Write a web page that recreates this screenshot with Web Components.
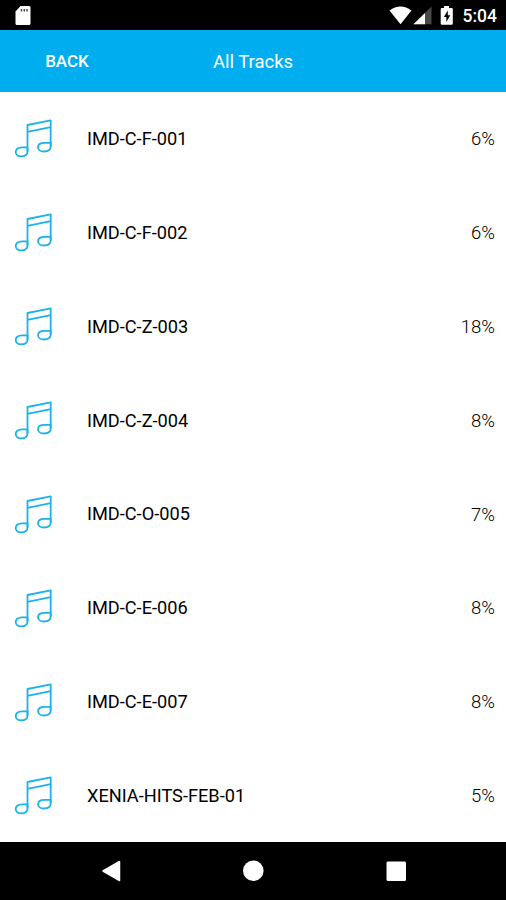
<!DOCTYPE html>
<html lang="en">
<head>
<meta charset="utf-8">
<title>All Tracks</title>
<style>
    body {
        margin: 0;
        background: #fff;
        font-family: Roboto, "Liberation Sans", sans-serif;
    }
</style>
</head>
<body>
<tracks-screen></tracks-screen>

<script>
class StatusBar extends HTMLElement {
    constructor() {
        super();
        this.attachShadow({ mode: 'open' });
    }

    connectedCallback() {
        this.shadowRoot.innerHTML = `
            <style>
                :host {
                    display: flex;
                    align-items: center;
                    box-sizing: border-box;
                    height: 30px;
                    padding: 0 9px 0 14px;
                    background: #000;
                    color: #fff;
                }
                svg {
                    display: block;
                    height: 30px;
                }
                .icons {
                    margin-left: auto;
                    margin-right: 8px;
                }
                .time {
                    font-size: 17.5px;
                    font-weight: 500;
                    line-height: 30px;
                    padding-top: 2px;
                }
            </style>
            <svg width="18" height="30" viewBox="0 0 18 30">
                <path d="M6.5 6H15q1.5 0 1.5 1.5V23.500Q16.500 25 15 25H3Q1.500 25 1.500 23.500V11.500Z" fill="#fff"/>
                <path d="M7.500 9v2.500M10.300 9v2.500M13 9v2.500" stroke="#444" stroke-width="1.400"/>
            </svg>
            <svg class="icons" width="66" height="30" viewBox="390 0 66 30">
                <path d="M390.500 10.500Q401.500 2.500 412.500 10.500L401.500 24.300Z" fill="#fff"/>
                <path d="M432.500 6.500V24.300H414.500Z" fill="#484848"/>
                <path d="M426 13V24.300H414.500Z" fill="#fff"/>
                <path d="M445 6h5v2h2.500q1.300 0 1.300 1.300V23.500q0 1.300-1.300 1.300h-9.500q-1.300 0-1.300-1.300V9.300Q441.700 8 443 8h2Z" fill="#fff"/>
                <path d="M448.800 10.500l-4 6.500h2.500v5l4-6.800h-2.500Z" fill="#000"/>
            </svg>
            <span class="time"><slot></slot></span>
        `;
    }
}

class NavHeader extends HTMLElement {
    constructor() {
        super();
        this.attachShadow({ mode: 'open' });
    }

    connectedCallback() {
        const heading = this.getAttribute('heading');

        this.shadowRoot.innerHTML = `
            <style>
                :host {
                    display: grid;
                    grid-template-columns: 134px 1fr 134px;
                    align-items: center;
                    box-sizing: border-box;
                    height: 61.5px;
                    padding-top: 1px;
                    background: #00aeef;
                    color: #fff;
                    text-align: center;
                }
                .back {
                    font-size: 17px;
                    font-weight: 500;
                }
                .heading {
                    font-size: 18.5px;
                    padding-top: 2px;
                }
            </style>
            <span class="back"><slot></slot></span>
            <span class="heading">${heading}</span>
        `;
    }
}

class TrackRow extends HTMLElement {
    constructor() {
        super();
        this.attachShadow({ mode: 'open' });
    }

    connectedCallback() {
        const name = this.getAttribute('name');
        const percent = this.getAttribute('percent');

        this.shadowRoot.innerHTML = `
            <style>
                :host {
                    display: flex;
                    align-items: center;
                    height: 93.86px;
                    padding: 0 11px 0 14px;
                    color: #000;
                    font-size: 18.2px;
                }
                svg {
                    margin-right: 33px;
                }
                .name {
                    font-weight: 370;
                }
                .percent {
                    margin-left: auto;
                    padding-top: 1.4px;
                    font-size: 18.5px;
                    font-weight: 340;
                }
            </style>
            <svg width="40" height="40" viewBox="14 118 40 40" fill="none" stroke="#1cb2ec" stroke-width="1.8" stroke-linejoin="round">
                <path d="M27.500 151.500V125L50.700 120.300V146.500M27.500 131.800L50.700 127.200"/>
                <path d="M27.500 147.300H22C17.900 147.300 15.700 149.600 15.700 152.100C15.700 154.900 18.300 156.400 21 156.400C25 156.400 27.500 154.500 27.500 151.500Z"/>
                <path d="M50.700 142.800H44.500C40.300 142.800 38 144.800 38 147.200C38 149.900 40.700 151.500 43.700 151.500C48 151.500 50.700 149.700 50.700 146.500Z"/>
            </svg>
            <span class="name">${name}</span>
            <span class="percent">${percent}</span>
        `;
    }
}

class SystemNav extends HTMLElement {
    constructor() {
        super();
        this.attachShadow({ mode: 'open' });
    }

    connectedCallback() {
        this.shadowRoot.innerHTML = `
            <style>
                :host {
                    display: block;
                    height: 58px;
                    background: #000;
                }
                svg {
                    display: block;
                }
            </style>
            <svg width="506" height="58" viewBox="0 842 506 58" fill="#fff" stroke="#fff" stroke-linejoin="round">
                <path d="M103 871L119.500 861.500V880.500Z" stroke-width="1.500"/>
                <circle cx="253.300" cy="870.700" r="10.300" stroke="none"/>
                <rect x="387" y="862" width="18.500" height="18.500" rx=".5"/>
            </svg>
        `;
    }
}

class TracksScreen extends HTMLElement {
    constructor() {
        super();
        this.attachShadow({ mode: 'open' });
    }

    connectedCallback() {
        const tracks = [
            ['IMD-C-F-001', '6%'],
            ['IMD-C-F-002', '6%'],
            ['IMD-C-Z-003', '18%'],
            ['IMD-C-Z-004', '8%'],
            ['IMD-C-O-005', '7%'],
            ['IMD-C-E-006', '8%'],
            ['IMD-C-E-007', '8%'],
            ['XENIA-HITS-FEB-01', '5%']
        ];

        this.shadowRoot.innerHTML = `
            <style>
                :host {
                    display: flex;
                    flex-direction: column;
                    width: 506px;
                    height: 900px;
                    overflow: hidden;
                }
                main {
                    flex: 1;
                    min-height: 0;
                    overflow: hidden;
                }
                status-bar, nav-header, system-nav {
                    flex-shrink: 0;
                }
            </style>
            <status-bar>5:04</status-bar>
            <nav-header heading="All Tracks">BACK</nav-header>
            <main>
                ${tracks.map(([name, percent]) => `<track-row name="${name}" percent="${percent}"></track-row>`).join('')}
            </main>
            <system-nav></system-nav>
        `;
    }
}

customElements.define('status-bar', StatusBar);
customElements.define('nav-header', NavHeader);
customElements.define('track-row', TrackRow);
customElements.define('system-nav', SystemNav);
customElements.define('tracks-screen', TracksScreen);
</script>
</body>
</html>
